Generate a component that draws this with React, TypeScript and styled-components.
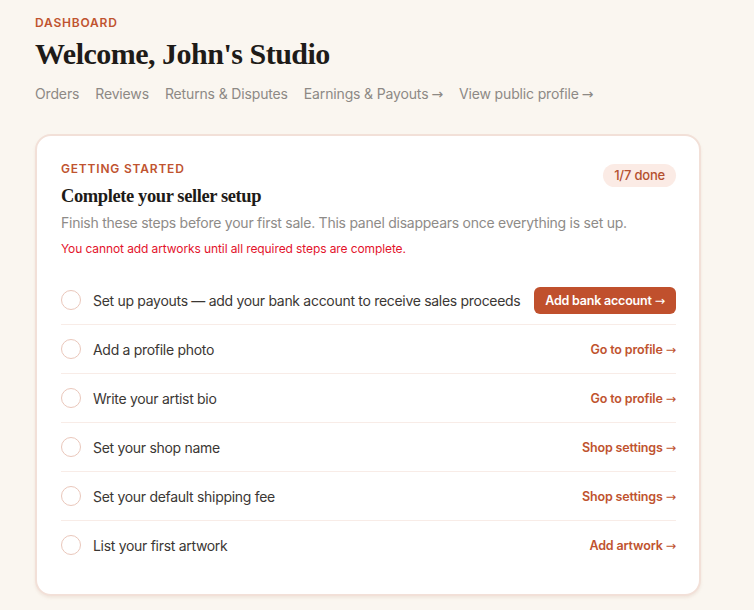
import styled, { createGlobalStyle } from "styled-components";

const GlobalStyle = createGlobalStyle`
  html, body {
    margin: 0;
    padding: 0;
    background: #faf6f0;
  }
  body {
    font-family: "Inter", "Noto Sans", sans-serif;
    -webkit-font-smoothing: antialiased;
  }
`;

const Page = styled.div`
  padding: 15px 35px 16px 35px;
  width: 666px;
`;

const Eyebrow = styled.div`
  font-size: 12px;
  font-weight: 600;
  letter-spacing: 0.8px;
  color: #c0532f;
  text-transform: uppercase;
`;

const Heading = styled.h1`
  font-family: "Liberation Serif", "DejaVu Serif", serif;
  font-weight: 700;
  font-size: 30px;
  letter-spacing: -0.5px;
  color: #1e1b18;
  margin: 4px 0 0 0;
  line-height: 40px;
`;

const Nav = styled.nav`
  display: flex;
  gap: 16px;
  margin-top: 9px;
  margin-bottom: 29px;
`;

const NavLink = styled.a`
  font-size: 14px;
  letter-spacing: -0.15px;
  color: #8d8985;
  text-decoration: none;
  line-height: 22px;
`;

// long thin arrow used after every link / action
const Arrow = styled.span`
  font-family: "DejaVu Sans", sans-serif;
  font-weight: 400;
  margin-left: 3px;
`;

const Card = styled.section`
  background: #fff;
  border: 2px solid #f2e0d8;
  border-radius: 16px;
  padding: 25px 23px 25px 24px;
  box-shadow: 0 2px 3px rgba(200, 160, 140, 0.18);
`;

const CardHead = styled.div`
  display: flex;
  justify-content: space-between;
  align-items: flex-start;
`;

const CardTitle = styled.h2`
  font-family: "Liberation Serif", "DejaVu Serif", serif;
  font-weight: 700;
  font-size: 18.5px;
  letter-spacing: -0.4px;
  color: #1e1b18;
  margin: 8px 0 0 0;
  line-height: 24px;
`;

const Badge = styled.span`
  background: #fbebe5;
  color: #b4502f;
  font-size: 13px;
  font-weight: 500;
  letter-spacing: -0.2px;
  border-radius: 12px;
  padding: 4px 11px;
  margin-top: 3px;
  line-height: 15px;
`;

const Description = styled.p`
  font-size: 14px;
  letter-spacing: -0.25px;
  color: #8e8b88;
  margin: 5px 0 0 0;
  line-height: 20px;
`;

const Warning = styled.p`
  font-size: 12px;
  letter-spacing: -0.1px;
  color: #e3132c;
  margin: 7px 0 0 0;
  line-height: 18px;
`;

const Steps = styled.ul`
  list-style: none;
  margin: 18px 0 0 0;
  padding: 0;
`;

const Step = styled.li<{ $last?: boolean }>`
  display: flex;
  align-items: center;
  height: 48px;
  border-bottom: ${({ $last }) => ($last ? "none" : "1px solid #f8ece7")};
`;

const Check = styled.span`
  box-sizing: border-box;
  width: 20px;
  height: 20px;
  border: 1.5px solid #eac7bb;
  border-radius: 50%;
  flex-shrink: 0;
  margin-right: 12px;
`;

const StepLabel = styled.span`
  flex: 1;
  font-size: 14px;
  letter-spacing: -0.3px;
  color: #3b3734;
  white-space: nowrap;
`;

const PrimaryAction = styled.button`
  background: #c0502d;
  color: #fff;
  border: none;
  border-radius: 6px;
  font-family: inherit;
  font-size: 12.5px;
  font-weight: 600;
  letter-spacing: -0.2px;
  height: 27px;
  padding: 0 11px;
  cursor: pointer;
`;

const LinkAction = styled.a`
  font-size: 12.5px;
  font-weight: 600;
  letter-spacing: -0.15px;
  color: #c0532f;
  text-decoration: none;
`;

const steps = [
  { label: "Set up payouts — add your bank account to receive sales proceeds", action: "Add bank account", primary: true },
  { label: "Add a profile photo", action: "Go to profile" },
  { label: "Write your artist bio", action: "Go to profile" },
  { label: "Set your shop name", action: "Shop settings" },
  { label: "Set your default shipping fee", action: "Shop settings" },
  { label: "List your first artwork", action: "Add artwork" },
];

export default function App() {
  return (
    <>
      <GlobalStyle />
      <Page>
        <Eyebrow>Dashboard</Eyebrow>
        <Heading>Welcome, John's Studio</Heading>
        <Nav>
          <NavLink>Orders</NavLink>
          <NavLink>Reviews</NavLink>
          <NavLink>Returns &amp; Disputes</NavLink>
          <NavLink>Earnings &amp; Payouts<Arrow>→</Arrow></NavLink>
          <NavLink>View public profile<Arrow>→</Arrow></NavLink>
        </Nav>
        <Card>
          <CardHead>
            <div>
              <Eyebrow>Getting started</Eyebrow>
              <CardTitle>Complete your seller setup</CardTitle>
            </div>
            <Badge>1/7 done</Badge>
          </CardHead>
          <Description>
            Finish these steps before your first sale. This panel disappears once everything is set up.
          </Description>
          <Warning>You cannot add artworks until all required steps are complete.</Warning>
          <Steps>
            {steps.map((s, i) => (
              <Step key={i} $last={i === steps.length - 1}>
                <Check />
                <StepLabel>{s.label}</StepLabel>
                {s.primary ? (
                  <PrimaryAction>{s.action}<Arrow>→</Arrow></PrimaryAction>
                ) : (
                  <LinkAction>{s.action}<Arrow>→</Arrow></LinkAction>
                )}
              </Step>
            ))}
          </Steps>
        </Card>
      </Page>
    </>
  );
}
